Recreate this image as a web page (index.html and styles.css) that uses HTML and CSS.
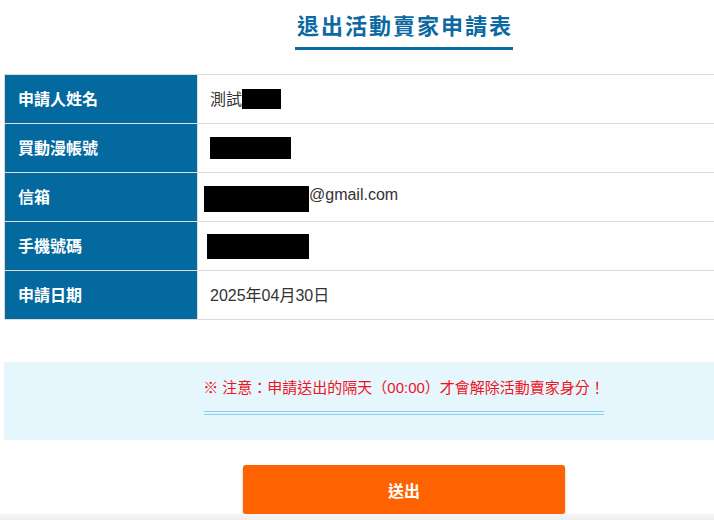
FILE: index.html
```html
<!DOCTYPE html>
<html>
<head>
  <meta charset="UTF-8">
  <meta name="viewport" content="width=device-width, initial-scale=1.0">
  <title>退出活動賣家申請表</title>
  <link rel="stylesheet" href="styles.css">
</head>
<body>
  <div class="container">
    <h1 class="page-title"><span>退出活動賣家申請表</span></h1>

    <table class="apply-table">
      <tr>
        <th>申請人姓名</th>
        <td>測試<span class="mask mask-name"></span></td>
      </tr>
      <tr>
        <th>買動漫帳號</th>
        <td><span class="mask mask-account"></span></td>
      </tr>
      <tr>
        <th>信箱</th>
        <td><span class="mask mask-mail"></span>@gmail.com</td>
      </tr>
      <tr>
        <th>手機號碼</th>
        <td><span class="mask mask-phone"></span></td>
      </tr>
      <tr>
        <th>申請日期</th>
        <td>2025年04月30日</td>
      </tr>
    </table>

    <div class="notice">
      <p>※ 注意：申請送出的隔天（00:00）才會解除活動賣家身分！</p>
      <div class="notice-line"></div>
    </div>

    <div class="actions">
      <button type="button" class="submit-btn">送出</button>
    </div>
  </div>
  <div class="page-bottom"></div>
</body>
</html>
```

FILE: styles.css
```css
html, body {
  overflow: hidden;
}

body {
  margin: 0;
  background-color: #fff;
  font-family: "Liberation Sans", Arial, "Noto Sans CJK TC", sans-serif;
  color: #333;
}

.container {
  width: 800px;
  margin-left: 4px;
  padding-top: 12px;
}

.page-title {
  margin: 0 0 24px;
  text-align: center;
  font-size: 22px;
  font-weight: bold;
  line-height: 30px;
}

.page-title span {
  display: inline-block;
  color: #0c69a2;
  letter-spacing: 2px;
  padding: 0 0 5px 2px;
  border-bottom: 3px solid #0c69a2;
}

.apply-table {
  width: 100%;
  border-collapse: collapse;
  border: 1px solid #dcdcdc;
  font-size: 16px;
}

.apply-table th,
.apply-table td {
  height: 49px;
  box-sizing: border-box;
  padding: 0 0 3px;
  border: 1px solid #dcdcdc;
  vertical-align: middle;
}

.apply-table th {
  width: 193px;
  padding-left: 13px;
  background-color: #04699f;
  color: #fff;
  text-align: left;
  font-weight: bold;
}

.apply-table td {
  padding-left: 12px;
  color: #333;
}

.mask {
  display: inline-block;
  background-color: #000;
  vertical-align: middle;
}

.mask-name {
  width: 39px;
  height: 20px;
  margin-top: -2px;
}

.mask-account {
  width: 81px;
  height: 22px;
  margin-top: 3px;
}

.mask-mail {
  width: 105px;
  height: 26px;
  margin-left: -6px;
  margin-top: 6px;
}

.mask-phone {
  width: 102px;
  height: 25px;
  margin-left: -3px;
  margin-top: 3px;
}

.notice {
  margin-top: 42px;
  height: 78px;
  background-color: #e6f6fd;
  text-align: center;
  overflow: hidden;
}

.notice p {
  margin: 17px 0 0;
  color: #f0131c;
  font-size: 15px;
  line-height: 18px;
}

.notice-line {
  width: 400px;
  height: 2px;
  margin: 14px auto 0;
  border-top: 1px solid #8ccdf0;
  border-bottom: 1px solid #8ccdf0;
}

.actions {
  text-align: center;
  padding-top: 25px;
}

.submit-btn {
  width: 322px;
  height: 49px;
  border: none;
  border-radius: 3px;
  background-color: #ff6200;
  color: #fff;
  font-family: "Noto Sans CJK TC", sans-serif;
  font-size: 16px;
  font-weight: bold;
  box-shadow: 0 2px 3px rgba(0, 0, 0, 0.25);
  cursor: pointer;
}

.page-bottom {
  position: fixed;
  left: 0;
  right: 0;
  bottom: 0;
  height: 6px;
  background: linear-gradient(#f6f6f6, #eeeeee);
}
```
